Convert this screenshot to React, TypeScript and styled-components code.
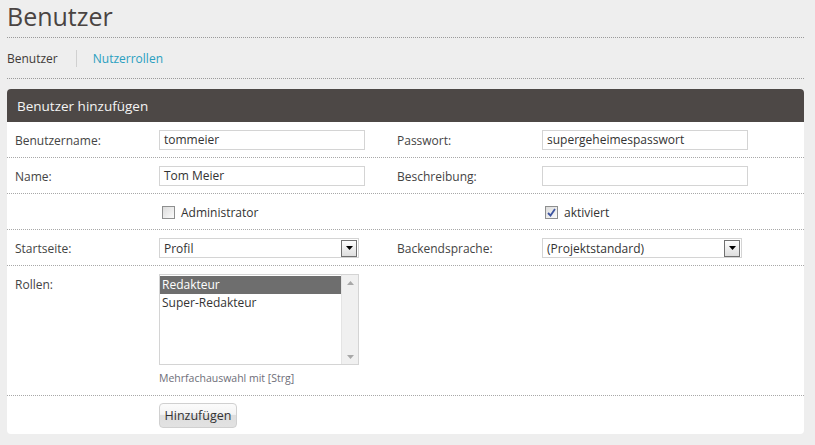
import React from "react";
import styled, { createGlobalStyle } from "styled-components";

const Global = createGlobalStyle`
  html, body { margin: 0; padding: 0; background: #eeeeee; }
  body { font-family: "Open Sans", "Noto Sans", sans-serif; color: #444; }
`;

const Page = styled.div`
  width: 797px;
  margin-left: 7px;
  display: flex;
  flex-direction: column;
`;

const Title = styled.h1`
  margin: 0;
  padding: 0 0 4px 0;
  font-size: 25px;
  line-height: 33px;
  font-weight: 400;
  color: #4a4442;
  border-bottom: 1px dotted #9a9a9a;
`;

const Tabs = styled.nav`
  display: flex;
  align-items: center;
  height: 40px;
  border-bottom: 1px dotted #9a9a9a;
  font-size: 12px;
`;

const Tab = styled.span<{ $active?: boolean }>`
  color: ${(p) => (p.$active ? "#3f3a38" : "#2a9fc0")};
  padding: 0 ${(p) => (p.$active ? "18px" : "0")} 0 ${(p) => (p.$active ? "0" : "16px")};
  border-right: ${(p) => (p.$active ? "1px solid #d0d0d0" : "none")};
  line-height: 17px;
`;

const Panel = styled.section`
  margin-top: 10px;
  background: #fff;
  border-radius: 4px;
  overflow: hidden;
`;

const PanelHeader = styled.header`
  background: #4d4846;
  color: #f4f4f4;
  height: 33px;
  display: flex;
  align-items: center;
  padding: 0 10px;
  font-size: 13.5px;
`;

const Row = styled.div<{ $top?: boolean; $pad?: string }>`
  display: grid;
  grid-template-columns: 144px 238px 145px 1fr;
  align-items: ${(p) => (p.$top ? "start" : "center")};
  padding: ${(p) => p.$pad ?? "8px 8px 7px"};
  border-bottom: 1px dotted #a8a8a8;
  min-height: 20px;

  &:last-child {
    border-bottom: none;
  }
`;

const Label = styled.label<{ $top?: boolean }>`
  font-size: 12px;
  color: #444;
  padding-top: ${(p) => (p.$top ? "2px" : "0")};
`;

const TextInput = styled.div`
  width: 206px;
  height: 20px;
  box-sizing: border-box;
  border: 1px solid #d4d4d4;
  padding: 0 4px;
  font-size: 12px;
  line-height: 18px;
  color: #333;
`;

const CheckLine = styled.div`
  display: flex;
  align-items: center;
  gap: 6px;
  padding-left: 3px;
  font-size: 12px;
  color: #333;
`;

const CheckBox = styled.span`
  width: 13px;
  height: 13px;
  box-sizing: border-box;
  border: 1px solid #8e8f8f;
  background: linear-gradient(135deg, #dcdcdc, #fbfbfb);
  display: inline-flex;
  align-items: center;
  justify-content: center;
`;

const SelectBox = styled.div`
  width: 200px;
  height: 20px;
  box-sizing: border-box;
  border: 1px solid #d4d4d4;
  display: flex;
  align-items: center;
  justify-content: space-between;
  padding: 0 1px 0 4px;
  font-size: 12px;
  color: #333;
`;

const ArrowButton = styled.span`
  width: 16px;
  height: 17px;
  box-sizing: border-box;
  border: 1px solid #707070;
  background: linear-gradient(#fdfdfd, #dedede);
  display: flex;
  align-items: center;
  justify-content: center;
`;

const ListField = styled.div`
  display: flex;
  flex-direction: column;
`;

const ListBox = styled.div`
  width: 200px;
  height: 91px;
  box-sizing: border-box;
  border: 1px solid #d4d4d4;
  display: flex;
`;

const ListItems = styled.div`
  flex: 1;
  display: flex;
  flex-direction: column;
  padding-top: 1px;
`;

const ListItem = styled.div<{ $selected?: boolean }>`
  height: 18px;
  line-height: 17px;
  padding: 0 2px;
  font-size: 12px;
  background: ${(p) => (p.$selected ? "#6e6e6e" : "transparent")};
  color: ${(p) => (p.$selected ? "#fff" : "#333")};
`;

const ScrollTrack = styled.div`
  width: 16px;
  background: #f0f0f0;
  border-left: 1px solid #e4e4e4;
  display: flex;
  flex-direction: column;
  justify-content: space-between;
  align-items: center;
  padding: 6px 0 5px;
`;

const Hint = styled.div`
  margin-top: 6px;
  font-size: 10.5px;
  color: #6e6e78;
`;

const Button = styled.button`
  width: 78px;
  height: 25px;
  box-sizing: border-box;
  border: 1px solid #d0d0d0;
  border-radius: 4px;
  background: linear-gradient(#fbfbfb 0%, #f4f4f4 45%, #dedede 50%, #e2e2e2 100%);
  font-family: inherit;
  font-size: 12.5px;
  color: #333;
  padding: 0;
`;

const Empty = styled.span``;

const Arrow = () => (
  <svg width="7" height="4" viewBox="0 0 7 4">
    <path d="M0 0H7L3.5 4Z" fill="#000" />
  </svg>
);

const Tri = ({ up }: { up?: boolean }) => (
  <svg width="7" height="4" viewBox="0 0 7 4">
    <path d={up ? "M0 4H7L3.5 0Z" : "M0 0H7L3.5 4Z"} fill="#a8a8a8" />
  </svg>
);

const Check = () => (
  <svg width="9" height="9" viewBox="0 0 9 9">
    <path d="M1 5L3.5 7.5L8 1" stroke="#3e55a0" strokeWidth="1.8" fill="none" />
  </svg>
);

export default function App() {
  return (
    <>
      <Global />
      <Page>
        <Title>Benutzer</Title>
        <Tabs>
          <Tab $active>Benutzer</Tab>
          <Tab>Nutzerrollen</Tab>
        </Tabs>
        <Panel>
          <PanelHeader>Benutzer hinzufügen</PanelHeader>
          <Row>
            <Label>Benutzername:</Label>
            <TextInput>tommeier</TextInput>
            <Label>Passwort:</Label>
            <TextInput>supergeheimespasswort</TextInput>
          </Row>
          <Row>
            <Label>Name:</Label>
            <TextInput>Tom Meier</TextInput>
            <Label>Beschreibung:</Label>
            <TextInput />
          </Row>
          <Row>
            <Empty />
            <CheckLine>
              <CheckBox />
              Administrator
            </CheckLine>
            <Empty />
            <CheckLine>
              <CheckBox>
                <Check />
              </CheckBox>
              aktiviert
            </CheckLine>
          </Row>
          <Row>
            <Label>Startseite:</Label>
            <SelectBox>
              Profil
              <ArrowButton>
                <Arrow />
              </ArrowButton>
            </SelectBox>
            <Label>Backendsprache:</Label>
            <SelectBox>
              (Projektstandard)
              <ArrowButton>
                <Arrow />
              </ArrowButton>
            </SelectBox>
          </Row>
          <Row $top $pad="8px 8px 10px">
            <Label $top>Rollen:</Label>
            <ListField>
              <ListBox>
                <ListItems>
                  <ListItem $selected>Redakteur</ListItem>
                  <ListItem>Super-Redakteur</ListItem>
                </ListItems>
                <ScrollTrack>
                  <Tri up />
                  <Tri />
                </ScrollTrack>
              </ListBox>
              <Hint>Mehrfachauswahl mit [Strg]</Hint>
            </ListField>
          </Row>
          <Row $pad="7px 8px 6px">
            <Empty />
            <div>
              <Button>Hinzufügen</Button>
            </div>
          </Row>
        </Panel>
      </Page>
    </>
  );
}
